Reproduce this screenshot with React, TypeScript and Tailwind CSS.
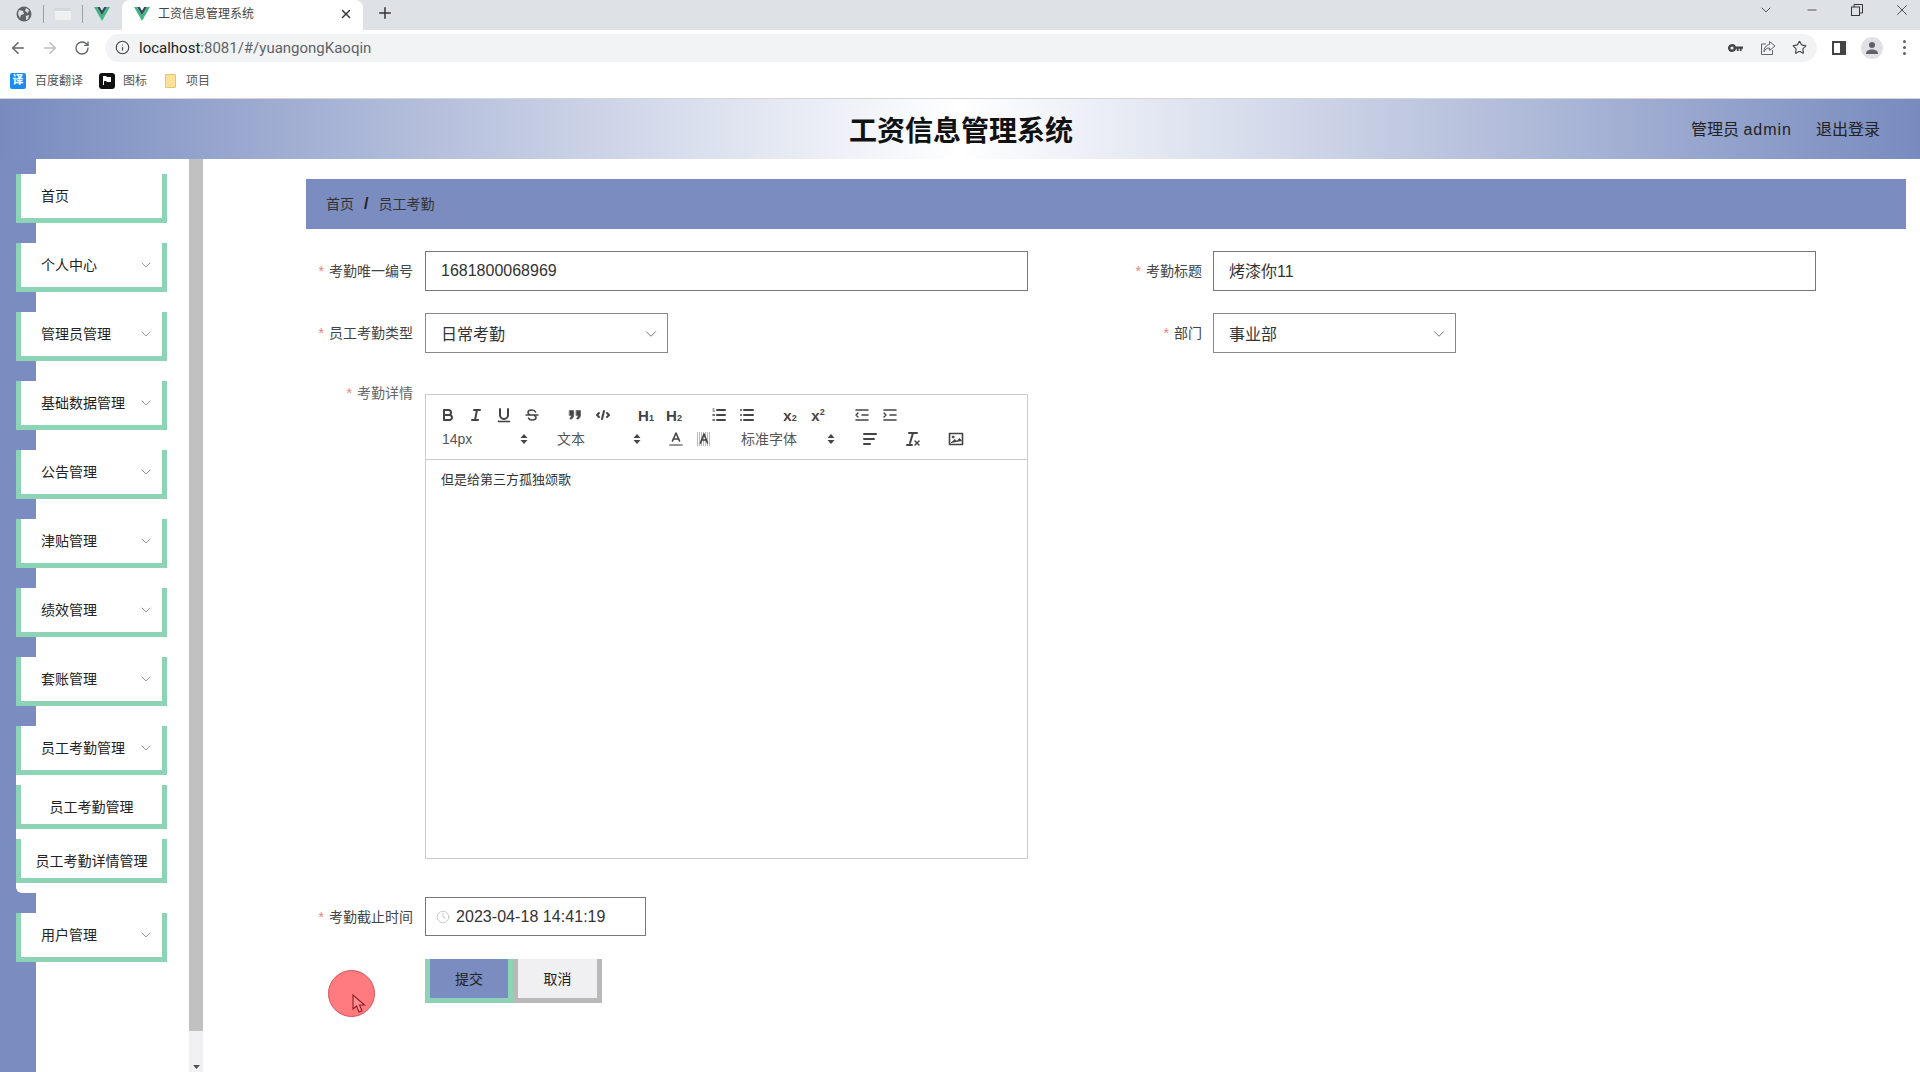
import React from "react";
import { ArrowLeft, ArrowRight, RotateCw, Info, Star, ChevronDown, X, Plus, Minus, Clock } from "lucide-react";

const Vue = () => (
  <svg width="16" height="14" viewBox="0 0 16 14" className="shrink-0">
    <polygon points="0,0 3.2,0 8,8.2 12.8,0 16,0 8,14" fill="#41b883" />
    <polygon points="3.2,0 5.8,0 8,3.8 10.2,0 12.8,0 8,8.2" fill="#35495e" />
  </svg>
);

const MenuItem = ({ label, arrow = true }: { label: string; arrow?: boolean }) => (
  <div className="flex h-[49px] w-[151px] items-center justify-between border-x-[5px] border-b-[5px] border-[#8dd3b6] bg-white pl-5 pr-[8px] text-sm text-[#222]">
    <span>{label}</span>
    {arrow && <ChevronDown size={16} strokeWidth={1} className="text-[#666]" />}
  </div>
);

const SubItem = ({ label }: { label: string }) => (
  <div className="flex h-[44px] w-[151px] items-center justify-center border-x-[5px] border-b-[5px] border-[#8dd3b6] bg-white pt-[5px] text-sm whitespace-nowrap text-[#222]">
    {label}
  </div>
);

const Label = ({ text, className = "" }: { text: string; className?: string }) => (
  <div className={`w-[107px] text-right text-sm leading-5 whitespace-nowrap text-[#444] ${className}`}>
    <span className="mr-[5px] text-[#f08080]">*</span>
    {text}
  </div>
);

const Btn = ({ children }: { children: React.ReactNode }) => (
  <div className="flex h-6 w-7 shrink-0 items-center justify-center text-[#444]">
    <svg width="18" height="18" viewBox="0 0 18 18" fill="none" stroke="#444" strokeWidth="2" strokeLinecap="round" strokeLinejoin="round">
      {children}
    </svg>
  </div>
);

const TextBtn = ({ main, sub, sup }: { main: string; sub?: string; sup?: string }) => (
  <div className="flex h-6 w-7 shrink-0 items-center justify-center text-[15px] leading-none font-bold text-[#444]">
    <span>{main}</span>
    {sub && <span className="mt-[6px] text-[9px] leading-none">{sub}</span>}
    {sup && <span className="mb-[6px] text-[9px] leading-none">{sup}</span>}
  </div>
);

const Picker = ({ label, w }: { label: string; w: string }) => (
  <div className={`flex h-6 shrink-0 items-center justify-between pl-2 pr-[6px] text-sm text-[#555] ${w}`}>
    <span>{label}</span>
    <svg width="8" height="12" viewBox="0 0 8 12" fill="#444">
      <polygon points="4,1 7.5,5 0.5,5" />
      <polygon points="4,11 7.5,7 0.5,7" />
    </svg>
  </div>
);

const Gap = ({ w = "w-[15px]" }: { w?: string }) => <div className={`shrink-0 ${w}`} />;

const menus = ["个人中心", "管理员管理", "基础数据管理", "公告管理", "津贴管理", "绩效管理", "套账管理"];

export default function App() {
  return (
    <div className="flex h-[1072px] w-[1920px] flex-col overflow-hidden bg-white font-['Liberation_Sans','Noto_Sans_CJK_SC',sans-serif] text-[#222]">
      {/* Tab strip */}
      <div className="flex h-[30px] shrink-0 items-center bg-[#dee1e6]">
        <div className="flex w-[122px] items-center pb-[3px] pl-[16px]">
          <svg width="16" height="16" viewBox="0 0 16 16">
            <circle cx="8" cy="8" r="7.5" fill="#5f6368" />
            <path d="M3 4l4 1 1 3-3 1-1 3-2-4zM10 2l3 2-1 3-3-2zM10 10l3-1-1 4-2 1z" fill="#dee1e6" />
          </svg>
          <div className="ml-[11px] h-[18px] w-px bg-[#9aa0a6]" />
          <div className="ml-[11px] h-[12px] w-[16px] rounded-[1px] border-t-[3px] border-[#d5d7da] bg-[#eef0f2]" />
          <div className="ml-[11px] h-[18px] w-px bg-[#9aa0a6]" />
          <div className="ml-[11px]"><Vue /></div>
        </div>
        <div className="flex h-[30px] w-[241px] items-center rounded-t-lg bg-white pb-[3px] pl-[12px] pr-[10px]">
          <Vue />
          <span className="ml-[8px] flex-1 text-xs text-[#444]">工资信息管理系统</span>
          <X size={14} strokeWidth={2.5} className="text-[#333]" />
        </div>
        <div className="pb-[4px]"><Plus size={18} strokeWidth={2} className="ml-[13px] text-[#333]" /></div>
        <div className="ml-auto flex items-center pb-[10px] pr-[9px] text-[#333]">
          <ChevronDown size={16} strokeWidth={1.2} />
          <Minus size={14} strokeWidth={1.4} className="ml-[31px]" />
          <svg width="12" height="12" viewBox="0 0 12 12" fill="none" stroke="#333" className="ml-[32px]">
            <rect x="0.5" y="3" width="8" height="8.5" />
            <path d="M3 3V0.5h8.5V9H8.5" />
          </svg>
          <X size={18} strokeWidth={1.1} className="ml-[30px]" />
        </div>
      </div>

      {/* Address bar */}
      <div className="flex h-[35px] shrink-0 items-center bg-white text-[#5f6368]">
        <div className="flex w-[105px] items-center pl-[9px]">
          <ArrowLeft size={18} strokeWidth={2} />
          <ArrowRight size={18} strokeWidth={2} className="ml-[14px] text-[#b9bcc0]" />
          <RotateCw size={16} strokeWidth={2} className="ml-[15px]" />
        </div>
        <div className="flex h-[28px] w-[1712px] items-center rounded-full bg-[#f1f3f4] pl-[10px] pr-[10px]">
          <Info size={15} strokeWidth={1.8} className="text-[#444]" />
          <span className="ml-[9px] pt-[1px] font-['Roboto',sans-serif] text-[15px] text-[#222]">localhost<span className="text-[#5f6368]">:8081/#/yuangongKaoqin</span></span>
          <div className="ml-auto flex items-center">
            <svg width="15" height="8" viewBox="0 0 15 8" fill="#444">
              <path d="M4 0a4 4 0 1 1-3.7 5.5A4 4 0 0 1 4 0zm0 2.4a1.6 1.6 0 1 0 0 3.2 1.6 1.6 0 0 0 0-3.2zM7.5 2.6H15v2.2h-1.4V7h-1.8V4.8h-1.2V7H8.8V4.8H7.5z" />
            </svg>
            <svg width="16" height="16" viewBox="0 0 16 16" fill="none" stroke="#5f6368" strokeWidth="1" className="ml-[17px]">
              <path d="M6 4H1.5v10.5h11V10M9.5 1.5L15 6l-5.5 4.5V8C6.5 8 5 9.5 4 12c0-4 2-7 5.5-7.5z" />
            </svg>
            <Star size={15} strokeWidth={1.8} className="ml-[16px] text-[#444]" />
          </div>
        </div>
        <div className="ml-[15px] h-[14px] w-[14px] border-2 border-r-[6px] border-[#444]" />
        <div className="ml-[15px] flex h-[22px] w-[22px] items-center justify-center rounded-full bg-[#e0e1e6]">
          <svg width="14" height="14" viewBox="0 0 14 14" fill="#5f6368">
            <circle cx="7" cy="4" r="3" />
            <path d="M1 13c0-3.5 3-4.5 6-4.5s6 1 6 4.5z" />
          </svg>
        </div>
        <div className="ml-[20px] flex flex-col gap-[3px]">
          <div className="h-[3px] w-[3px] rounded-full bg-[#5f6368]" />
          <div className="h-[3px] w-[3px] rounded-full bg-[#5f6368]" />
          <div className="h-[3px] w-[3px] rounded-full bg-[#5f6368]" />
        </div>
      </div>

      {/* Bookmarks */}
      <div className="flex h-[33px] shrink-0 items-center bg-white pb-[2px] pl-[10px] text-xs text-[#555]">
        <div className="flex h-[16px] w-[16px] items-center justify-center rounded-[2px] bg-[#1a8cf0] text-[11px] leading-none font-bold text-white">译</div>
        <span className="ml-[9px]">百度翻译</span>
        <div className="ml-[16px] flex h-[16px] w-[16px] items-center justify-center rounded-[3px] bg-[#111]">
          <svg width="10" height="9" viewBox="0 0 10 9" fill="#fff"><path d="M1 0h3l1 1h4v5H5L4 5H2v4H1z" /></svg>
        </div>
        <span className="ml-[8px]">图标</span>
        <div className="ml-[18px] h-[14px] w-[11px] rounded-[1px] border border-[#eac568] bg-[#fbe19a]" />
        <span className="ml-[10px]">项目</span>
      </div>

      {/* Header */}
      <div className="flex h-[61px] shrink-0 items-center justify-between border-t border-[#d5d5d8] bg-[linear-gradient(90deg,#788bbf,#ffffff_50%,#788bbf)] pl-[849px] pr-[40px]">
        <div className="mt-[6px] text-[28px] font-bold text-[#111]">工资信息管理系统</div>
        <div className="mt-[2px] flex items-center gap-[24px] text-base text-[#222]">
          <span>管理员 <span className="tracking-[1px]">admin</span></span>
          <span>退出登录</span>
        </div>
      </div>

      {/* Body */}
      <div className="flex min-h-0 flex-1">
        {/* Sidebar */}
        <div className="flex w-[189px] shrink-0 flex-col items-start gap-5 bg-[linear-gradient(90deg,#7a8cc0_36px,#ffffff_36px)] pl-4 pt-[15px]">
          <MenuItem label="首页" arrow={false} />
          {menus.map((m) => (
            <MenuItem key={m} label={m} />
          ))}
          <div className="flex flex-col">
            <MenuItem label="员工考勤管理" />
            <div className="flex w-[151px] flex-col gap-[10px] rounded-b-md bg-white pb-[10px] pt-[10px]">
              <SubItem label="员工考勤管理" />
              <SubItem label="员工考勤详情管理" />
            </div>
          </div>
          <MenuItem label="用户管理" />
        </div>

        {/* Scrollbar */}
        <div className="flex w-[14px] shrink-0 flex-col bg-[#f1f1f3]">
          <div className="h-[872px] bg-[#c1c1c1]" />
          <div className="mt-auto mb-[3px] flex justify-center">
            <svg width="7" height="4" viewBox="0 0 7 4" fill="#505050"><polygon points="0,0 7,0 3.5,4" /></svg>
          </div>
        </div>

        {/* Main */}
        <div className="relative min-w-0 flex-1 pl-[103px] pr-[14px] pt-5">
          <div className="flex h-[50px] items-center bg-[#7a8cc0] pl-5 text-sm text-[#333]">
            <span>首页</span>
            <span className="mx-[10px] text-base font-bold text-[#222]">/</span>
            <span>员工考勤</span>
          </div>

          <div className="mt-[22px] grid grid-cols-[722px_721px] gap-x-[67px] gap-y-[22px]">
            <div className="flex items-center gap-[12px]">
              <Label text="考勤唯一编号" />
              <div className="flex h-10 w-[603px] items-center border border-[#777] pl-[15px] text-base text-[#333]">1681800068969</div>
            </div>
            <div className="flex items-center gap-[11px]">
              <Label text="考勤标题" />
              <div className="flex h-10 w-[603px] items-center border border-[#777] pl-[15px] pt-[2px] text-base text-[#333]">烤漆你11</div>
            </div>
            <div className="flex items-center gap-[12px]">
              <Label text="员工考勤类型" />
              <div className="flex h-10 w-[243px] items-center justify-between border border-[#888] pl-[15px] pr-[7px] text-base text-[#333]">
                <span className="pt-[3px]">日常考勤</span>
                <ChevronDown size={18} strokeWidth={1.1} className="mt-[2px] text-[#555]" />
              </div>
            </div>
            <div className="flex items-center gap-[11px]">
              <Label text="部门" />
              <div className="flex h-10 w-[243px] items-center justify-between border border-[#888] pl-[15px] pr-[7px] text-base text-[#333]">
                <span className="pt-[3px]">事业部</span>
                <ChevronDown size={18} strokeWidth={1.1} className="mt-[2px] text-[#555]" />
              </div>
            </div>
          </div>

          {/* Editor */}
          <div className="mt-[41px] flex items-start gap-[12px]">
            <Label text="考勤详情" className="-mt-[11px] text-[#666]" />
            <div className="h-[465px] w-[603px] border border-[#ccc]">
              <div className="flex h-[65px] flex-col border-b border-[#ccc] px-2 py-2">
                <div className="flex">
                  <Btn>
                    <path d="M5,4H9.5A2.5,2.5,0,0,1,12,6.5v0A2.5,2.5,0,0,1,9.5,9H5V4Z" />
                    <path d="M5,9h5.5A2.5,2.5,0,0,1,13,11.5v0A2.5,2.5,0,0,1,10.5,14H5V9Z" />
                  </Btn>
                  <Btn>
                    <line x1="7" x2="13" y1="4" y2="4" />
                    <line x1="5" x2="11" y1="14" y2="14" />
                    <line x1="8" x2="10" y1="14" y2="4" />
                  </Btn>
                  <Btn>
                    <path d="M5,3V9a4,4,0,0,0,4,4h0a4,4,0,0,0,4-4V3" />
                    <rect x="3" y="15" width="12" height="1" rx=".5" fill="#444" strokeWidth="0.6" />
                  </Btn>
                  <Btn>
                    <line x1="3" x2="15" y1="9" y2="9" strokeWidth="1.4" />
                    <path d="M12.5 6C12 4.7 10.6 4 9 4 7 4 5 5 5 6.5c0 1 .6 1.6 1.5 2" strokeWidth="1.6" />
                    <path d="M5.5 12c.5 1.3 1.9 2 3.5 2 2 0 4-1 4-2.5 0-1-.6-1.6-1.5-2" strokeWidth="1.6" />
                  </Btn>
                  <Gap />
                  <Btn>
                    <path d="M3.5 4.5h4.2V9c0 2.3-1.1 3.8-3.3 4.3L3.8 12c1-.4 1.5-1 1.6-2.4H3.5z" fill="#444" strokeWidth="0.5" />
                    <path d="M10.3 4.5h4.2V9c0 2.3-1.1 3.8-3.3 4.3L10.6 12c1-.4 1.5-1 1.6-2.4h-1.9z" fill="#444" strokeWidth="0.5" />
                  </Btn>
                  <Btn>
                    <polyline points="5 7 3 9 5 11" />
                    <polyline points="13 7 15 9 13 11" />
                    <line x1="10" x2="8" y1="5" y2="13" />
                  </Btn>
                  <Gap />
                  <TextBtn main="H" sub="1" />
                  <TextBtn main="H" sub="2" />
                  <Gap w="w-[17px]" />
                  <Btn>
                    <line x1="7" x2="15" y1="4" y2="4" />
                    <line x1="7" x2="15" y1="9" y2="9" />
                    <line x1="7" x2="15" y1="14" y2="14" />
                    <line x1="3" x2="4" y1="3" y2="3" strokeWidth="1" />
                    <line x1="3" x2="4.5" y1="5" y2="5" strokeWidth="1" />
                    <line x1="3" x2="4.5" y1="9" y2="9" strokeWidth="1.6" />
                    <line x1="3" x2="4.5" y1="14" y2="14" strokeWidth="1.6" />
                  </Btn>
                  <Btn>
                    <line x1="6" x2="15" y1="4" y2="4" />
                    <line x1="6" x2="15" y1="9" y2="9" />
                    <line x1="6" x2="15" y1="14" y2="14" />
                    <line x1="3" x2="3" y1="4" y2="4" />
                    <line x1="3" x2="3" y1="9" y2="9" />
                    <line x1="3" x2="3" y1="14" y2="14" />
                  </Btn>
                  <Gap />
                  <TextBtn main="x" sub="2" />
                  <TextBtn main="x" sup="2" />
                  <Gap w="w-[16px]" />
                  <Btn>
                    <line x1="3" x2="15" y1="4" y2="4" strokeWidth="1.6" />
                    <line x1="9" x2="15" y1="9" y2="9" strokeWidth="1.6" />
                    <line x1="3" x2="15" y1="14" y2="14" strokeWidth="1.6" />
                    <polyline points="5 7 3 9 5 11" strokeWidth="1.4" />
                  </Btn>
                  <Btn>
                    <line x1="3" x2="15" y1="4" y2="4" strokeWidth="1.6" />
                    <line x1="9" x2="15" y1="9" y2="9" strokeWidth="1.6" />
                    <line x1="3" x2="15" y1="14" y2="14" strokeWidth="1.6" />
                    <polyline points="3 7 5 9 3 11" strokeWidth="1.4" />
                  </Btn>
                </div>
                <div className="flex">
                  <Picker label="14px" w="w-[100px]" />
                  <Gap />
                  <Picker label="文本" w="w-[98px]" />
                  <Gap />
                  <Btn>
                    <line x1="3" x2="15" y1="15" y2="15" stroke="#999" strokeWidth="2" />
                    <polyline points="5.5 11 9 3 12.5 11" strokeWidth="1.6" />
                    <line x1="6.5" x2="11.5" y1="9" y2="9" strokeWidth="1.6" />
                  </Btn>
                  <Btn>
                    <path d="M2 3h14M2 5h14M2 7h14M2 9h14M2 11h14M2 13h14M2 15h14" stroke="#777" strokeWidth="1" strokeDasharray="1 1" strokeLinecap="butt" />
                    <polyline points="5.5 13 9 4 12.5 13" strokeWidth="1.6" />
                    <line x1="6.5" x2="11.5" y1="10" y2="10" strokeWidth="1.6" />
                  </Btn>
                  <Gap />
                  <Picker label="标准字体" w="w-[108px]" />
                  <Gap />
                  <Btn>
                    <line x1="3" x2="15" y1="4" y2="4" />
                    <line x1="3" x2="13" y1="9" y2="9" />
                    <line x1="3" x2="9" y1="14" y2="14" />
                  </Btn>
                  <Gap />
                  <Btn>
                    <line x1="5" x2="13" y1="3" y2="3" />
                    <line x1="9" x2="6" y1="3" y2="13" />
                    <line x1="3" x2="8" y1="15" y2="15" />
                    <line x1="11" x2="15" y1="11" y2="15" strokeWidth="1.4" />
                    <line x1="15" x2="11" y1="11" y2="15" strokeWidth="1.4" />
                  </Btn>
                  <Gap />
                  <Btn>
                    <rect x="2.5" y="3.5" width="13" height="11" strokeWidth="1.6" />
                    <circle cx="6" cy="7" r="1" fill="#444" strokeWidth="0.8" />
                    <polyline points="4 13 8 9.5 10 11.5 12.5 8.5 14.5 11" fill="#444" strokeWidth="1" />
                  </Btn>
                </div>
              </div>
              <div className="px-[15px] pt-[10px] text-[13px] leading-[20px] text-[#333]">但是给第三方孤独颂歌</div>
            </div>
          </div>

          {/* Date */}
          <div className="mt-[38px] flex items-center gap-[12px]">
            <Label text="考勤截止时间" />
            <div className="flex h-[39px] w-[221px] items-center border border-[#777] pl-[10px] text-base text-[#333]">
              <Clock size={14} strokeWidth={1.3} className="text-[#bbb]" />
              <span className="ml-[6px] tracking-[0.05px]">2023-04-18 14:41:19</span>
            </div>
          </div>

          {/* Buttons */}
          <div className="ml-[119px] mt-[23px] flex">
            <div className="flex h-[44px] w-[88px] items-center justify-center border-x-[5px] border-b-[5px] border-[#8dd3b6] bg-[#7a8cc0] text-sm text-[#222]">提交</div>
            <div className="flex h-[44px] w-[89px] items-center justify-center border-x-[5px] border-b-[5px] border-[#b9b9b9] bg-[#f0f0f2] text-sm text-[#222]">取消</div>
          </div>

          {/* Cursor highlight overlay */}
          <div className="absolute left-[125px] top-[811px] h-[47px] w-[47px] rounded-full border border-[#d8505a] bg-[#ff7b80]">
            <svg width="14" height="20" viewBox="0 0 14 20" className="absolute left-[23px] top-[23px]" fill="#ff8f92" stroke="#8c1c26" strokeWidth="1.1">
              <path d="M1 1v14l3.5-3 2.5 6 3-1.3-2.5-5.7h5z" />
            </svg>
          </div>
        </div>
      </div>
    </div>
  );
}
